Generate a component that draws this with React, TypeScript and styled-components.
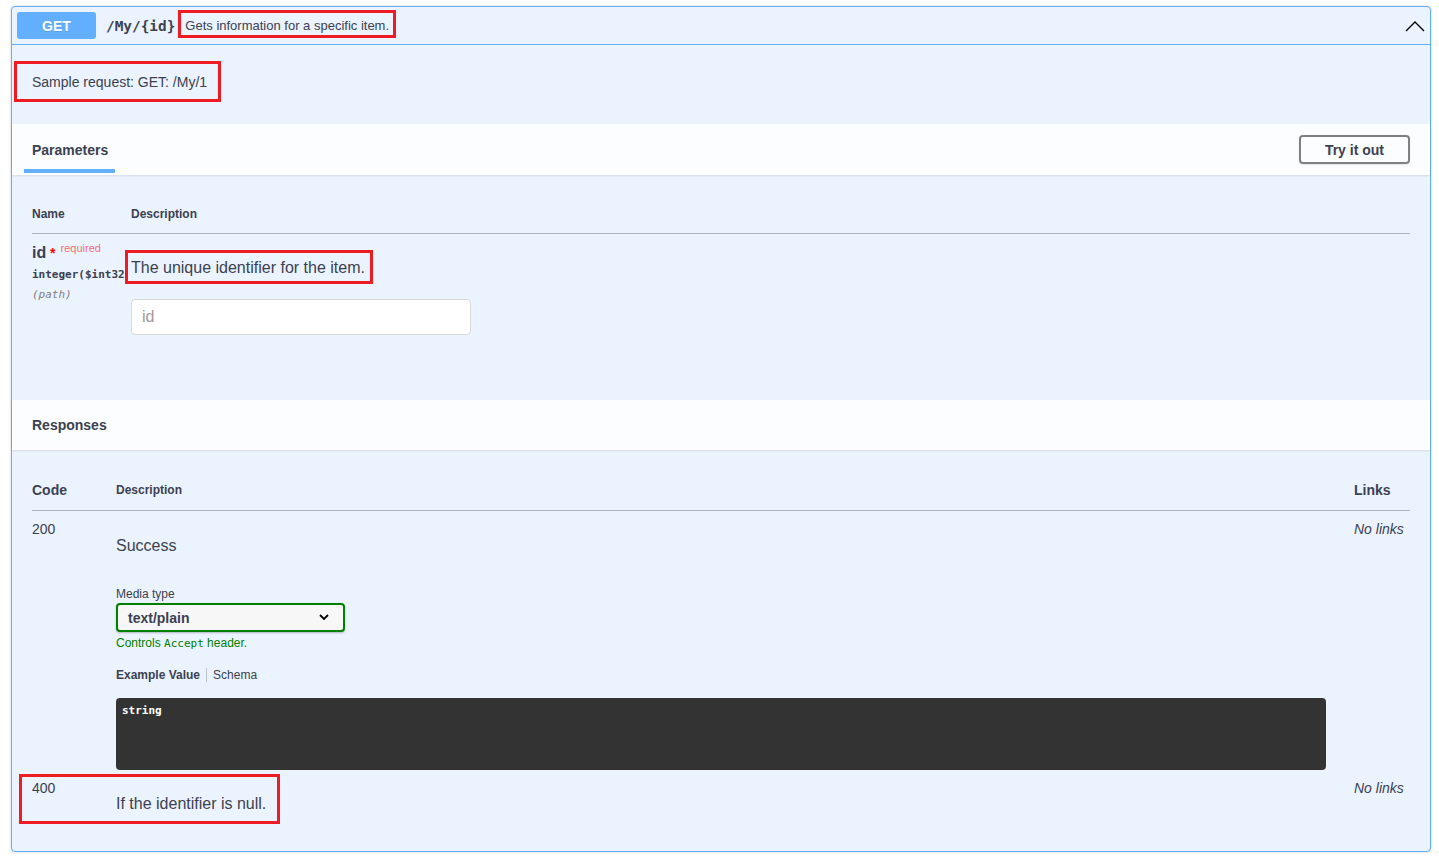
import * as React from 'react';
import styled, { createGlobalStyle } from 'styled-components';

const GlobalStyle = createGlobalStyle`
  body {
    margin: 0;
    background: #ffffff;
    font-family: "Liberation Sans", Arial, sans-serif;
    color: #3b4151;
  }
  * { box-sizing: border-box; }
`;

const MONO = `"DejaVu Sans Mono", "Liberation Mono", monospace`;

interface Ext {
  $t: number;
  $r: number;
  $b: number;
  $l: number;
}

// red rectangle drawn over the text (annotation)
const Mark = styled.span<Ext>`
  position: relative;
  &::after {
    content: "";
    position: absolute;
    top: -${(p) => p.$t}px;
    right: -${(p) => p.$r}px;
    bottom: -${(p) => p.$b}px;
    left: -${(p) => p.$l}px;
    border: 3px solid #ed1c24;
    pointer-events: none;
    z-index: 5;
  }
`;

const Page = styled.div`
  padding: 6px 8px 6px 11px;
`;

const Opblock = styled.div`
  border: 1px solid #61affe;
  border-radius: 4px;
  background: #ebf3fe;
  box-shadow: 0 0 3px rgba(0, 0, 0, 0.19);
`;

const Summary = styled.div`
  display: flex;
  align-items: center;
  padding: 5px;
  border-bottom: 1px solid #61affe;
`;

const Method = styled.span`
  width: 79px;
  height: 27px;
  display: flex;
  align-items: center;
  justify-content: center;
  background: #61affe;
  color: #fff;
  font-size: 14px;
  font-weight: 700;
  border-radius: 3px;
  text-shadow: 0 1px 0 rgba(0, 0, 0, 0.1);
`;

const Path = styled.span`
  font-family: ${MONO};
  font-size: 14.4px;
  font-weight: 700;
  padding: 0 10px;
  color: #3b4151;
`;

const SummaryDesc = styled.span`
  flex: 1;
  font-size: 13px;
  color: #3b4151;
`;

const Arrow = styled.svg`
  width: 20px;
  height: 20px;
  flex: none;
`;

const DescWrap = styled.div`
  padding: 15px 20px;
  margin-bottom: 5px;
  p {
    margin: 14px 0;
    font-size: 14px;
    line-height: 16px;
  }
`;

const SectionHeader = styled.div<{ $h: number }>`
  display: flex;
  align-items: center;
  justify-content: space-between;
  height: ${(p) => p.$h}px;
  padding: 0 20px;
  background: rgba(255, 255, 255, 0.8);
  box-shadow: 0 1px 2px rgba(0, 0, 0, 0.1);
`;

const SectionTitle = styled.h4`
  margin: 0;
  font-size: 14px;
  font-weight: 700;
  line-height: 16px;
  color: #3b4151;
`;

const TabTitle = styled(SectionTitle)`
  position: relative;
  &::after {
    content: "";
    position: absolute;
    left: -8px;
    top: calc(100% + 11px);
    width: 91px;
    height: 4px;
    background: #61affe;
  }
`;

const TryButton = styled.button`
  height: 29px;
  padding: 0 24px;
  background: transparent;
  border: 2px solid #808080;
  border-radius: 4px;
  font-family: "Liberation Sans", Arial, sans-serif;
  font-size: 14px;
  font-weight: 700;
  color: #3b4151;
  box-shadow: 0 1px 2px rgba(0, 0, 0, 0.1);
`;

const TableWrap = styled.div<{ $pt: number }>`
  padding: ${(p) => p.$pt}px 20px 20px;
`;

const Grid = styled.div<{ $cols: string }>`
  display: grid;
  grid-template-columns: ${(p) => p.$cols};
`;

const Th = styled.div<{ $size: number; $pad: string }>`
  padding: ${(p) => p.$pad};
  font-size: ${(p) => p.$size}px;
  line-height: ${(p) => (p.$size === 12 ? 14 : 16)}px;
  font-weight: 700;
  border-bottom: 1px solid rgba(59, 65, 81, 0.35);
`;

const Td = styled.div<{ $pb?: number }>`
  padding: 10px 0 ${(p) => p.$pb ?? 0}px;
  min-width: 0;
`;

const ParamName = styled.div`
  font-size: 16px;
  font-weight: 700;
  line-height: 18px;
  span {
    color: #ff0000;
    font-size: 14px;
  }
  &::after {
    content: "required";
    position: relative;
    top: -6px;
    padding: 5px;
    font-size: 11px;
    font-weight: 400;
    color: rgba(255, 0, 0, 0.6);
  }
`;

const ParamType = styled.div`
  max-width: 93px;
  padding: 5px 0 0;
  font-family: ${MONO};
  font-size: 11px;
  font-weight: 700;
  line-height: 14px;
  white-space: nowrap;
  overflow: hidden;
`;

const ParamIn = styled.div`
  padding: 6px 0 0;
  font-family: ${MONO};
  font-size: 11px;
  font-style: italic;
  line-height: 14px;
  color: #808080;
`;

const DescText = styled.p<{ $mt: number; $mb: number }>`
  margin: ${(p) => p.$mt}px 0 ${(p) => p.$mb}px;
  font-size: 16px;
  line-height: 18px;
`;

const Input = styled.input`
  display: block;
  width: 340px;
  height: 36px;
  padding: 8px 10px;
  border: 1px solid #d9d9d9;
  border-radius: 4px;
  background: #fff;
  font-family: "Liberation Sans", Arial, sans-serif;
  font-size: 16px;
  color: #3b4151;
  &::placeholder {
    color: #9a9a9a;
  }
`;

const Code = styled.div`
  font-size: 14px;
  line-height: 16px;
`;

const NoLinks = styled.div`
  font-size: 14px;
  line-height: 16px;
  font-style: italic;
`;

const MediaType = styled.div`
  margin-top: 32px;
`;

const Label = styled.div`
  font-size: 12px;
  line-height: 14px;
  margin-bottom: 2px;
`;

const Select = styled.div`
  width: 229px;
  height: 29px;
  display: flex;
  align-items: center;
  justify-content: space-between;
  padding: 0 14px 0 10px;
  border: 2px solid #008000;
  border-radius: 4px;
  background: #f7f7f7;
  box-shadow: 0 1px 2px rgba(0, 0, 0, 0.25);
  font-size: 14px;
  font-weight: 700;
`;

const AcceptMsg = styled.div`
  margin-top: 4px;
  font-size: 12px;
  line-height: 14px;
  color: #008000;
  code {
    font-family: ${MONO};
    font-size: 11px;
  }
`;

const Tabs = styled.div`
  display: flex;
  align-items: center;
  margin-top: 17px;
  font-size: 12px;
  line-height: 14px;
`;

const Tab = styled.span<{ $active?: boolean }>`
  font-weight: ${(p) => (p.$active ? 700 : 400)};
  padding: 0 6px;
  &:first-child {
    padding-left: 0;
    border-right: 1px solid rgba(0, 0, 0, 0.2);
  }
`;

const Pre = styled.pre`
  height: 72px;
  margin: 16px 28px 0 0;
  padding: 6px;
  background: #333333;
  border-radius: 4px;
  color: #fff;
  font-family: ${MONO};
  font-size: 11px;
  font-weight: 700;
  line-height: 14px;
`;

export default function App() {
  return (
    <>
      <GlobalStyle />
      <Page>
        <Opblock>
          <Summary>
            <Method>GET</Method>
            <Path>/My/{'{id}'}</Path>
            <SummaryDesc>
              <Mark $t={8} $r={7} $b={5} $l={7}>Gets information for a specific item.</Mark>
            </SummaryDesc>
            <Arrow viewBox="0 0 20 20">
              <polyline points="1,15 10,6 19,15" fill="none" stroke="#000" strokeWidth={1.4} />
            </Arrow>
          </Summary>

          <DescWrap>
            <p>
              <Mark $t={13} $r={14} $b={12} $l={18}>Sample request: GET: /My/1</Mark>
            </p>
          </DescWrap>

          <SectionHeader $h={51}>
            <TabTitle>Parameters</TabTitle>
            <TryButton>Try it out</TryButton>
          </SectionHeader>

          <TableWrap $pt={22}>
            <Grid $cols="99px 1fr">
              <Th $size={12} $pad="10px 0 12px">Name</Th>
              <Th $size={12} $pad="10px 0 12px">Description</Th>
              <Td>
                <ParamName>
                  id<span>&nbsp;*</span>
                </ParamName>
                <ParamType>integer($int32)</ParamType>
                <ParamIn>(path)</ParamIn>
              </Td>
              <Td $pb={45}>
                <DescText $mt={15} $mb={22}>
                  <Mark $t={9} $r={8} $b={8} $l={6}>The unique identifier for the item.</Mark>
                </DescText>
                <Input placeholder="id" />
              </Td>
            </Grid>
          </TableWrap>

          <SectionHeader $h={50}>
            <SectionTitle>Responses</SectionTitle>
          </SectionHeader>

          <TableWrap $pt={20}>
            <Grid $cols="84px 1fr 56px">
              <Th $size={14} $pad="12px 0">Code</Th>
              <Th $size={12} $pad="13px 0">Description</Th>
              <Th $size={14} $pad="12px 0">Links</Th>

              <Td>
                <Code>200</Code>
              </Td>
              <Td>
                <DescText $mt={16} $mb={0}>Success</DescText>
                <MediaType>
                  <Label>Media type</Label>
                  <Select>
                    text/plain
                    <svg width="10" height="7" viewBox="0 0 10 7">
                      <polyline points="1,1 5,5 9,1" fill="none" stroke="#000" strokeWidth={1.8} />
                    </svg>
                  </Select>
                  <AcceptMsg>
                    Controls <code>Accept</code> header.
                  </AcceptMsg>
                </MediaType>
                <Tabs>
                  <Tab $active>Example Value</Tab>
                  <Tab>Schema</Tab>
                </Tabs>
                <Pre>string</Pre>
              </Td>
              <Td>
                <NoLinks>No links</NoLinks>
              </Td>

              <Td>
                <Code>400</Code>
              </Td>
              <Td>
                <DescText $mt={15} $mb={18}>
                  <Mark $t={21} $r={14} $b={12} $l={97}>If the identifier is null.</Mark>
                </DescText>
              </Td>
              <Td>
                <NoLinks>No links</NoLinks>
              </Td>
            </Grid>
          </TableWrap>
        </Opblock>
      </Page>
    </>
  );
}
